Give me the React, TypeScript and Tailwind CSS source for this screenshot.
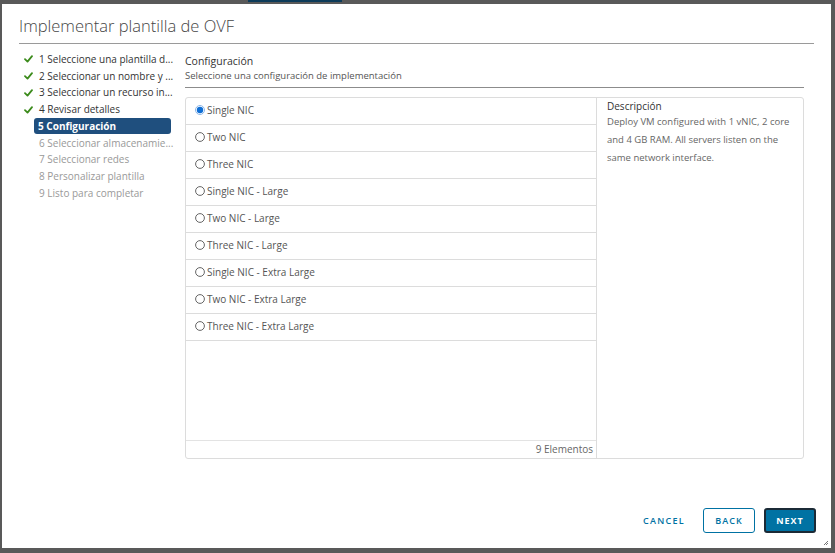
import React from "react";

const steps = [
  { n: "1 Seleccione una plantilla d...", s: "done" },
  { n: "2 Seleccionar un nombre y ...", s: "done" },
  { n: "3 Seleccionar un recurso in...", s: "done" },
  { n: "4 Revisar detalles", s: "done" },
  { n: "5 Configuración", s: "active" },
  { n: "6 Seleccionar almacenamie...", s: "todo" },
  { n: "7 Seleccionar redes", s: "todo" },
  { n: "8 Personalizar plantilla", s: "todo" },
  { n: "9 Listo para completar", s: "todo" },
];

const options = [
  "Single NIC",
  "Two NIC",
  "Three NIC",
  "Single NIC - Large",
  "Two NIC - Large",
  "Three NIC - Large",
  "Single NIC - Extra Large",
  "Two NIC - Extra Large",
  "Three NIC - Extra Large",
];

function Check() {
  return (
    <svg width="9" height="8" viewBox="0 0 9 8" className="shrink-0">
      <path d="M1 4.2 L3.5 6.6 L8 1.2" fill="none" stroke="#3c8b1c" strokeWidth="1.8" strokeLinecap="round" strokeLinejoin="round" />
    </svg>
  );
}

function Radio({ on }: { on: boolean }) {
  return on ? (
    <svg width="10" height="10" viewBox="0 0 10 10" className="shrink-0">
      <circle cx="5" cy="5" r="4.5" fill="#fff" stroke="#8db6e6" />
      <circle cx="5" cy="5" r="3.2" fill="#0f6fd6" />
    </svg>
  ) : (
    <svg width="10" height="10" viewBox="0 0 10 10" className="shrink-0">
      <circle cx="5" cy="5" r="4.4" fill="#fff" stroke="#555" strokeWidth="0.9" />
    </svg>
  );
}

export default function App() {
  return (
    <div
      className="w-[835px] h-[553px] bg-[#595959] pt-[4px] pl-[2px] pr-[4px] pb-[5px] relative overflow-hidden"
      style={{ fontFamily: "'Open Sans', 'Noto Sans', sans-serif" }}
    >
      <div className="absolute top-0 left-[248px] w-[94px] h-[2px] bg-[#0d3b5a]" />
      <div className="w-full h-full bg-white flex flex-col relative">
        <div className="px-[17px] pt-[11px]">
          <div className="text-[16.5px] font-light text-[#454545] leading-[22px] pb-[6px] border-b border-[#9a9a9a]">
            Implementar plantilla de OVF
          </div>
        </div>
        <div className="flex flex-1 pl-[20px] pr-[27px] pt-[7px]">
          <div className="w-[150px] shrink-0 flex flex-col pl-[2px]">
            {steps.map((st) => (
              <div key={st.n} className="h-[16.75px] flex items-center">
                <div className="w-[10px] shrink-0 flex items-center">{st.s === "done" && <Check />}</div>
                <div
                  className={
                    "h-[16px] flex items-center whitespace-nowrap text-[10px] " +
                    (st.s === "active"
                      ? "bg-[#1f4f7e] text-white font-bold rounded-[3px] w-[137px] pl-[4px]"
                      : st.s === "done"
                      ? "text-[#333] pl-[5px]"
                      : "text-[#999] pl-[5px]")
                  }
                >
                  {st.n}
                </div>
              </div>
            ))}
          </div>
          <div className="flex-1 flex flex-col pl-[13px]">
            <div className="text-[10.5px] text-[#333] leading-[14px] pt-[3px]">Configuración</div>
            <div className="text-[9.5px] text-[#555] leading-[14px] pt-[1px] pb-[4px] border-b border-[#8c8c8c]">
              Seleccione una configuración de implementación
            </div>
            <div className="mt-[9px] h-[362px] border border-[#dcdcdc] rounded-[3px] flex">
              <div className="w-[411px] flex flex-col border-r border-[#dcdcdc]">
                <div className="flex-1">
                  {options.map((o, i) => (
                    <div
                      key={o}
                      className="h-[27px] border-b border-[#dcdcdc] flex items-start pt-[6px] pl-[9px] gap-[2px] text-[10px] text-[#555]"
                    >
                      <div className="pt-[1px]">
                        <Radio on={i === 0} />
                      </div>
                      <span className="leading-[12px]">{o}</span>
                    </div>
                  ))}
                </div>
                <div className="h-[18px] border-t border-[#e3e3e3] flex items-center justify-end pr-[3px] text-[10px] text-[#666]">
                  9 Elementos
                </div>
              </div>
              <div className="flex-1 pl-[10px] pt-[1px] pr-[2px]">
                <div className="text-[10px] text-[#333] leading-[14px]">Descripción</div>
                <div className="text-[9.5px] text-[#666] leading-[18px]">
                  Deploy VM configured with 1 vNIC, 2 core and 4 GB RAM. All servers listen on the same network interface.
                </div>
              </div>
            </div>
          </div>
        </div>
        <div className="flex items-center justify-end pr-[15px] pb-[15px] gap-[9px]">
          <div className="h-[25px] px-[9px] flex items-center text-[9px] font-semibold tracking-[1.3px] text-[#0072a3]">CANCEL</div>
          <div className="h-[25px] w-[52px] border border-[#0072a3] rounded-[3px] flex items-center justify-center text-[9px] font-semibold tracking-[1px] text-[#0072a3]">
            BACK
          </div>
          <div className="h-[25px] w-[52px] border-2 border-[#1b2a36] rounded-[3px] bg-[#0072a3] flex items-center justify-center text-[9px] font-bold tracking-[1px] text-white">
            NEXT
          </div>
        </div>
        <svg className="absolute right-[2px] bottom-[2px]" width="6" height="6" viewBox="0 0 6 6">
          <path d="M5 1 L1 5 M5 3 L3 5" stroke="#777" strokeWidth="1" />
        </svg>
      </div>
    </div>
  );
}
